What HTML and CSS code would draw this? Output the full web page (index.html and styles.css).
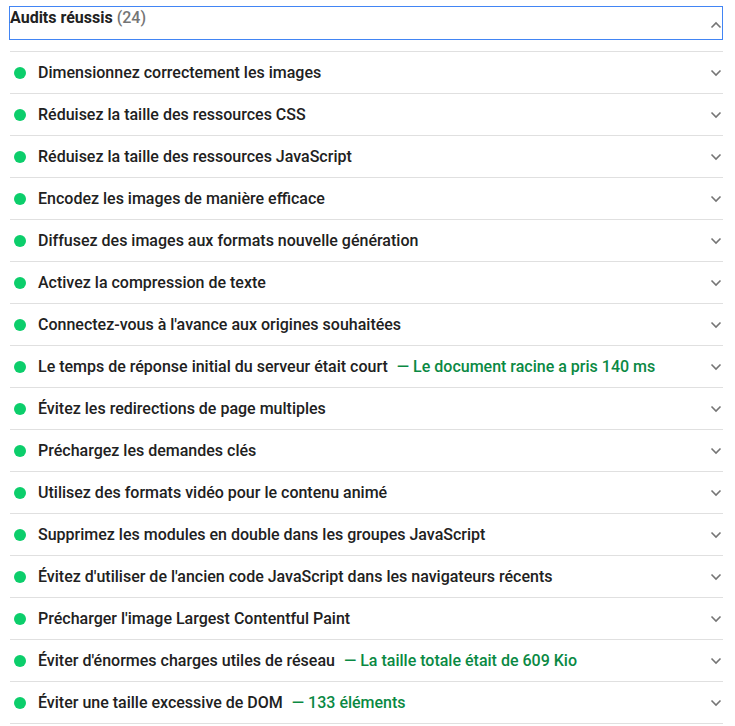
FILE: index.html
```html
<!DOCTYPE html>
<html lang="fr">
<head>
<meta charset="utf-8">
<link rel="stylesheet" href="styles.css">
</head>
<body>
<div class="group">
  <div class="group-header">
    <span class="group-title">Audits réussis</span>
    <span class="group-count">(24)</span>
    <svg class="chev up" viewBox="0 0 12 8" width="12" height="8"><path d="M1.5 6.5 L6 2 L10.5 6.5" fill="none" stroke="currentColor" stroke-width="1.6"/></svg>
  </div>
  <div class="audits">
    <div class="audit"><span class="dot"></span><span class="title">Dimensionnez correctement les images</span><svg class="chev" viewBox="0 0 12 8" width="12" height="8"><path d="M1.5 1.5 L6 6 L10.5 1.5" fill="none" stroke="currentColor" stroke-width="1.6"/></svg></div>
    <div class="audit"><span class="dot"></span><span class="title">Réduisez la taille des ressources CSS</span><svg class="chev" viewBox="0 0 12 8" width="12" height="8"><path d="M1.5 1.5 L6 6 L10.5 1.5" fill="none" stroke="currentColor" stroke-width="1.6"/></svg></div>
    <div class="audit"><span class="dot"></span><span class="title">Réduisez la taille des ressources JavaScript</span><svg class="chev" viewBox="0 0 12 8" width="12" height="8"><path d="M1.5 1.5 L6 6 L10.5 1.5" fill="none" stroke="currentColor" stroke-width="1.6"/></svg></div>
    <div class="audit"><span class="dot"></span><span class="title">Encodez les images de manière efficace</span><svg class="chev" viewBox="0 0 12 8" width="12" height="8"><path d="M1.5 1.5 L6 6 L10.5 1.5" fill="none" stroke="currentColor" stroke-width="1.6"/></svg></div>
    <div class="audit"><span class="dot"></span><span class="title">Diffusez des images aux formats nouvelle génération</span><svg class="chev" viewBox="0 0 12 8" width="12" height="8"><path d="M1.5 1.5 L6 6 L10.5 1.5" fill="none" stroke="currentColor" stroke-width="1.6"/></svg></div>
    <div class="audit"><span class="dot"></span><span class="title">Activez la compression de texte</span><svg class="chev" viewBox="0 0 12 8" width="12" height="8"><path d="M1.5 1.5 L6 6 L10.5 1.5" fill="none" stroke="currentColor" stroke-width="1.6"/></svg></div>
    <div class="audit"><span class="dot"></span><span class="title">Connectez-vous à l'avance aux origines souhaitées</span><svg class="chev" viewBox="0 0 12 8" width="12" height="8"><path d="M1.5 1.5 L6 6 L10.5 1.5" fill="none" stroke="currentColor" stroke-width="1.6"/></svg></div>
    <div class="audit"><span class="dot"></span><span class="title">Le temps de réponse initial du serveur était court</span><span class="value">— Le document racine a pris 140 ms</span><svg class="chev" viewBox="0 0 12 8" width="12" height="8"><path d="M1.5 1.5 L6 6 L10.5 1.5" fill="none" stroke="currentColor" stroke-width="1.6"/></svg></div>
    <div class="audit"><span class="dot"></span><span class="title">Évitez les redirections de page multiples</span><svg class="chev" viewBox="0 0 12 8" width="12" height="8"><path d="M1.5 1.5 L6 6 L10.5 1.5" fill="none" stroke="currentColor" stroke-width="1.6"/></svg></div>
    <div class="audit"><span class="dot"></span><span class="title">Préchargez les demandes clés</span><svg class="chev" viewBox="0 0 12 8" width="12" height="8"><path d="M1.5 1.5 L6 6 L10.5 1.5" fill="none" stroke="currentColor" stroke-width="1.6"/></svg></div>
    <div class="audit"><span class="dot"></span><span class="title">Utilisez des formats vidéo pour le contenu animé</span><svg class="chev" viewBox="0 0 12 8" width="12" height="8"><path d="M1.5 1.5 L6 6 L10.5 1.5" fill="none" stroke="currentColor" stroke-width="1.6"/></svg></div>
    <div class="audit"><span class="dot"></span><span class="title">Supprimez les modules en double dans les groupes JavaScript</span><svg class="chev" viewBox="0 0 12 8" width="12" height="8"><path d="M1.5 1.5 L6 6 L10.5 1.5" fill="none" stroke="currentColor" stroke-width="1.6"/></svg></div>
    <div class="audit"><span class="dot"></span><span class="title">Évitez d'utiliser de l'ancien code JavaScript dans les navigateurs récents</span><svg class="chev" viewBox="0 0 12 8" width="12" height="8"><path d="M1.5 1.5 L6 6 L10.5 1.5" fill="none" stroke="currentColor" stroke-width="1.6"/></svg></div>
    <div class="audit"><span class="dot"></span><span class="title">Précharger l'image Largest Contentful Paint</span><svg class="chev" viewBox="0 0 12 8" width="12" height="8"><path d="M1.5 1.5 L6 6 L10.5 1.5" fill="none" stroke="currentColor" stroke-width="1.6"/></svg></div>
    <div class="audit"><span class="dot"></span><span class="title">Éviter d'énormes charges utiles de réseau</span><span class="value">— La taille totale était de 609 Kio</span><svg class="chev" viewBox="0 0 12 8" width="12" height="8"><path d="M1.5 1.5 L6 6 L10.5 1.5" fill="none" stroke="currentColor" stroke-width="1.6"/></svg></div>
    <div class="audit"><span class="dot"></span><span class="title">Éviter une taille excessive de DOM</span><span class="value">— 133 éléments</span><svg class="chev" viewBox="0 0 12 8" width="12" height="8"><path d="M1.5 1.5 L6 6 L10.5 1.5" fill="none" stroke="currentColor" stroke-width="1.6"/></svg></div>
  </div>
</div>
</body>
</html>
```
FILE: styles.css
```css
html, body {
  margin: 0;
  padding: 0;
  background: #fff;
}
body {
  font-family: Roboto, "Liberation Sans", sans-serif;
  color: #212121;
  padding: 6px 12px 0 9px;
}
.group {
  width: 714px;
}
.group-header {
  display: flex;
  align-items: flex-start;
  height: 32px;
  border: 1px solid #4285f4;
  padding: 0;
}
.group-title {
  font-size: 16px;
  font-weight: 700;
  line-height: 22px;
  color: #212121;
}
.group-count {
  font-size: 16px;
  font-weight: 500;
  color: #757575;
  line-height: 22px;
  margin-left: 4px;
}
.group-header .chev {
  margin-left: auto;
  margin-top: 14px;
}
.chev {
  color: #757575;
  flex: none;
}
.audits {
  margin-top: 11px;
  margin-left: 1px;
  border-top: 1px solid #e0e0e0;
}
.audit {
  display: flex;
  align-items: center;
  height: 41px;
  border-bottom: 1px solid #e0e0e0;
  font-size: 16px;
  font-weight: 500;
  padding-right: 1px;
}
.dot {
  width: 12px;
  height: 12px;
  border-radius: 50%;
  background: #0cce6b;
  margin: 0 12px 0 4px;
  flex: none;
}
.title {
  color: #212121;
}
.value {
  color: #0a8943;
  margin-left: 9px;
}
.audit .chev {
  margin-left: auto;
}
```
